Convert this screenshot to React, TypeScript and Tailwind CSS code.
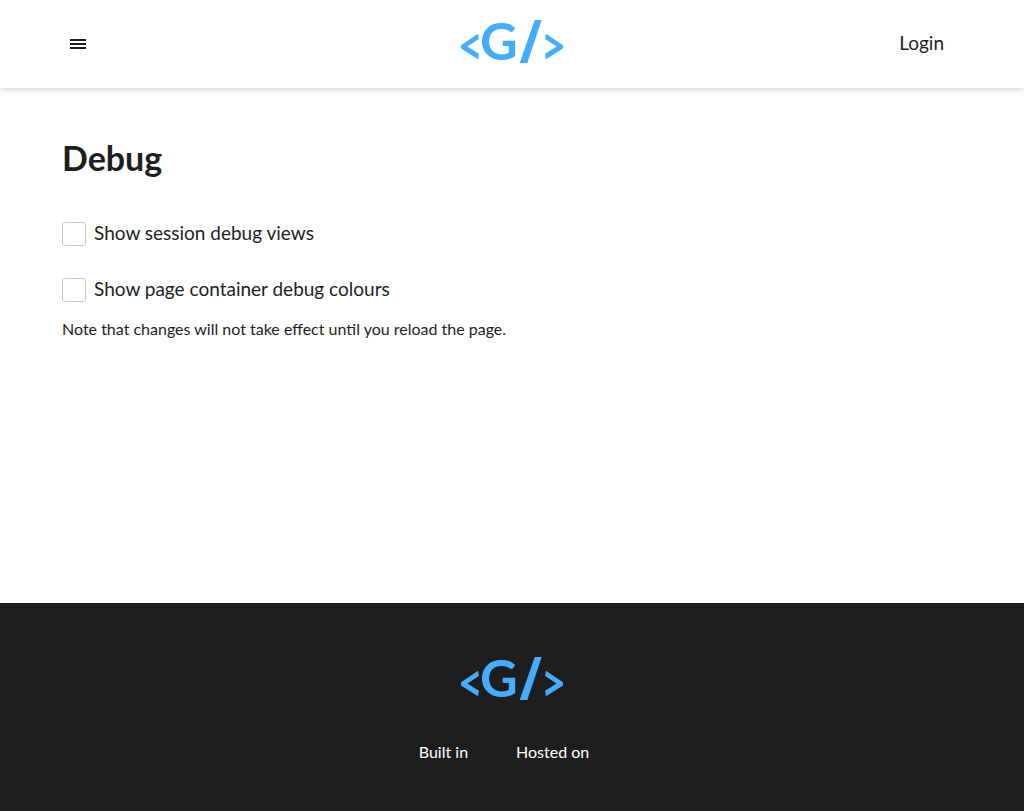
import { useState } from "react";

function Logo() {
  return (
    <svg
      viewBox="0 -10 102 64"
      className="h-16 w-[102px] overflow-visible fill-[#45adff]"
      role="img"
      aria-label="Home"
    >
      <path d="M0 25.2 17 13.7 17.9 19 6.4 26.5 17.9 33.7 17 39.3 0 28.4Z" />
      <text
        x="38"
        y="40"
        textAnchor="middle"
        className="font-['Lato',sans-serif] text-[52px] leading-none font-bold"
      >
        G
      </text>
      <path d="M73.7 0H80.7L66.3 43H58.7Z" />
      <path d="M102 25.2 85 13.7 84.1 19 95.6 26.5 84.1 33.7 85 39.3 102 28.4Z" />
    </svg>
  );
}

function Checkbox({ id, label }: { id: string; label: string }) {
  const [checked, setChecked] = useState(false);
  return (
    <div className="flex items-start gap-2">
      <input
        id={id}
        type="checkbox"
        checked={checked}
        onChange={(e) => setChecked(e.target.checked)}
        className="size-6 shrink-0 appearance-none rounded-[3px] border border-[#c9c7d6] bg-white checked:bg-[#45adff]"
      />
      <label htmlFor={id} className="text-[19px] leading-[22px]">
        {label}
      </label>
    </div>
  );
}

export default function App() {
  return (
    <div className="flex min-h-screen flex-col bg-white font-['Lato',sans-serif] text-[#1e1e1e]">
      <header className="shadow-[0_0_8px_rgba(0,0,0,0.25)]">
        <div className="mx-auto grid h-[88px] max-w-[900px] grid-cols-3 items-center">
          <button type="button" aria-label="Menu" className="justify-self-start p-2">
            <svg viewBox="0 0 16 10" className="h-[10px] w-4 fill-current" aria-hidden="true">
              <path d="M0 0h16v2H0zM0 4h16v2H0zM0 8h16v2H0z" />
            </svg>
          </button>
          <a href="#home" className="justify-self-center pb-1">
            <Logo />
          </a>
          <a href="#login" className="justify-self-end pr-[18px] pb-0.5 text-[19px] leading-[22px]">
            Login
          </a>
        </div>
      </header>

      <main className="mx-auto w-full max-w-[900px] flex-1 pt-12">
        <h1 className="text-[34px] leading-[44px] font-bold">Debug</h1>
        <div className="mt-[42px] flex flex-col gap-8">
          <Checkbox id="session-debug" label="Show session debug views" />
          <Checkbox id="container-debug" label="Show page container debug colours" />
        </div>
        <p className="mt-4 text-base leading-[22px]">
          Note that changes will not take effect until you reload the page.
        </p>
      </main>

      <footer className="flex flex-col items-center bg-[#1e1e1e] pt-11 pb-12 text-white">
        <a href="#home">
          <Logo />
        </a>
        <div className="mt-[30px] flex gap-12 pr-4 text-base leading-[22px]">
          <span>Built in</span>
          <span>Hosted on</span>
        </div>
      </footer>
    </div>
  );
}
